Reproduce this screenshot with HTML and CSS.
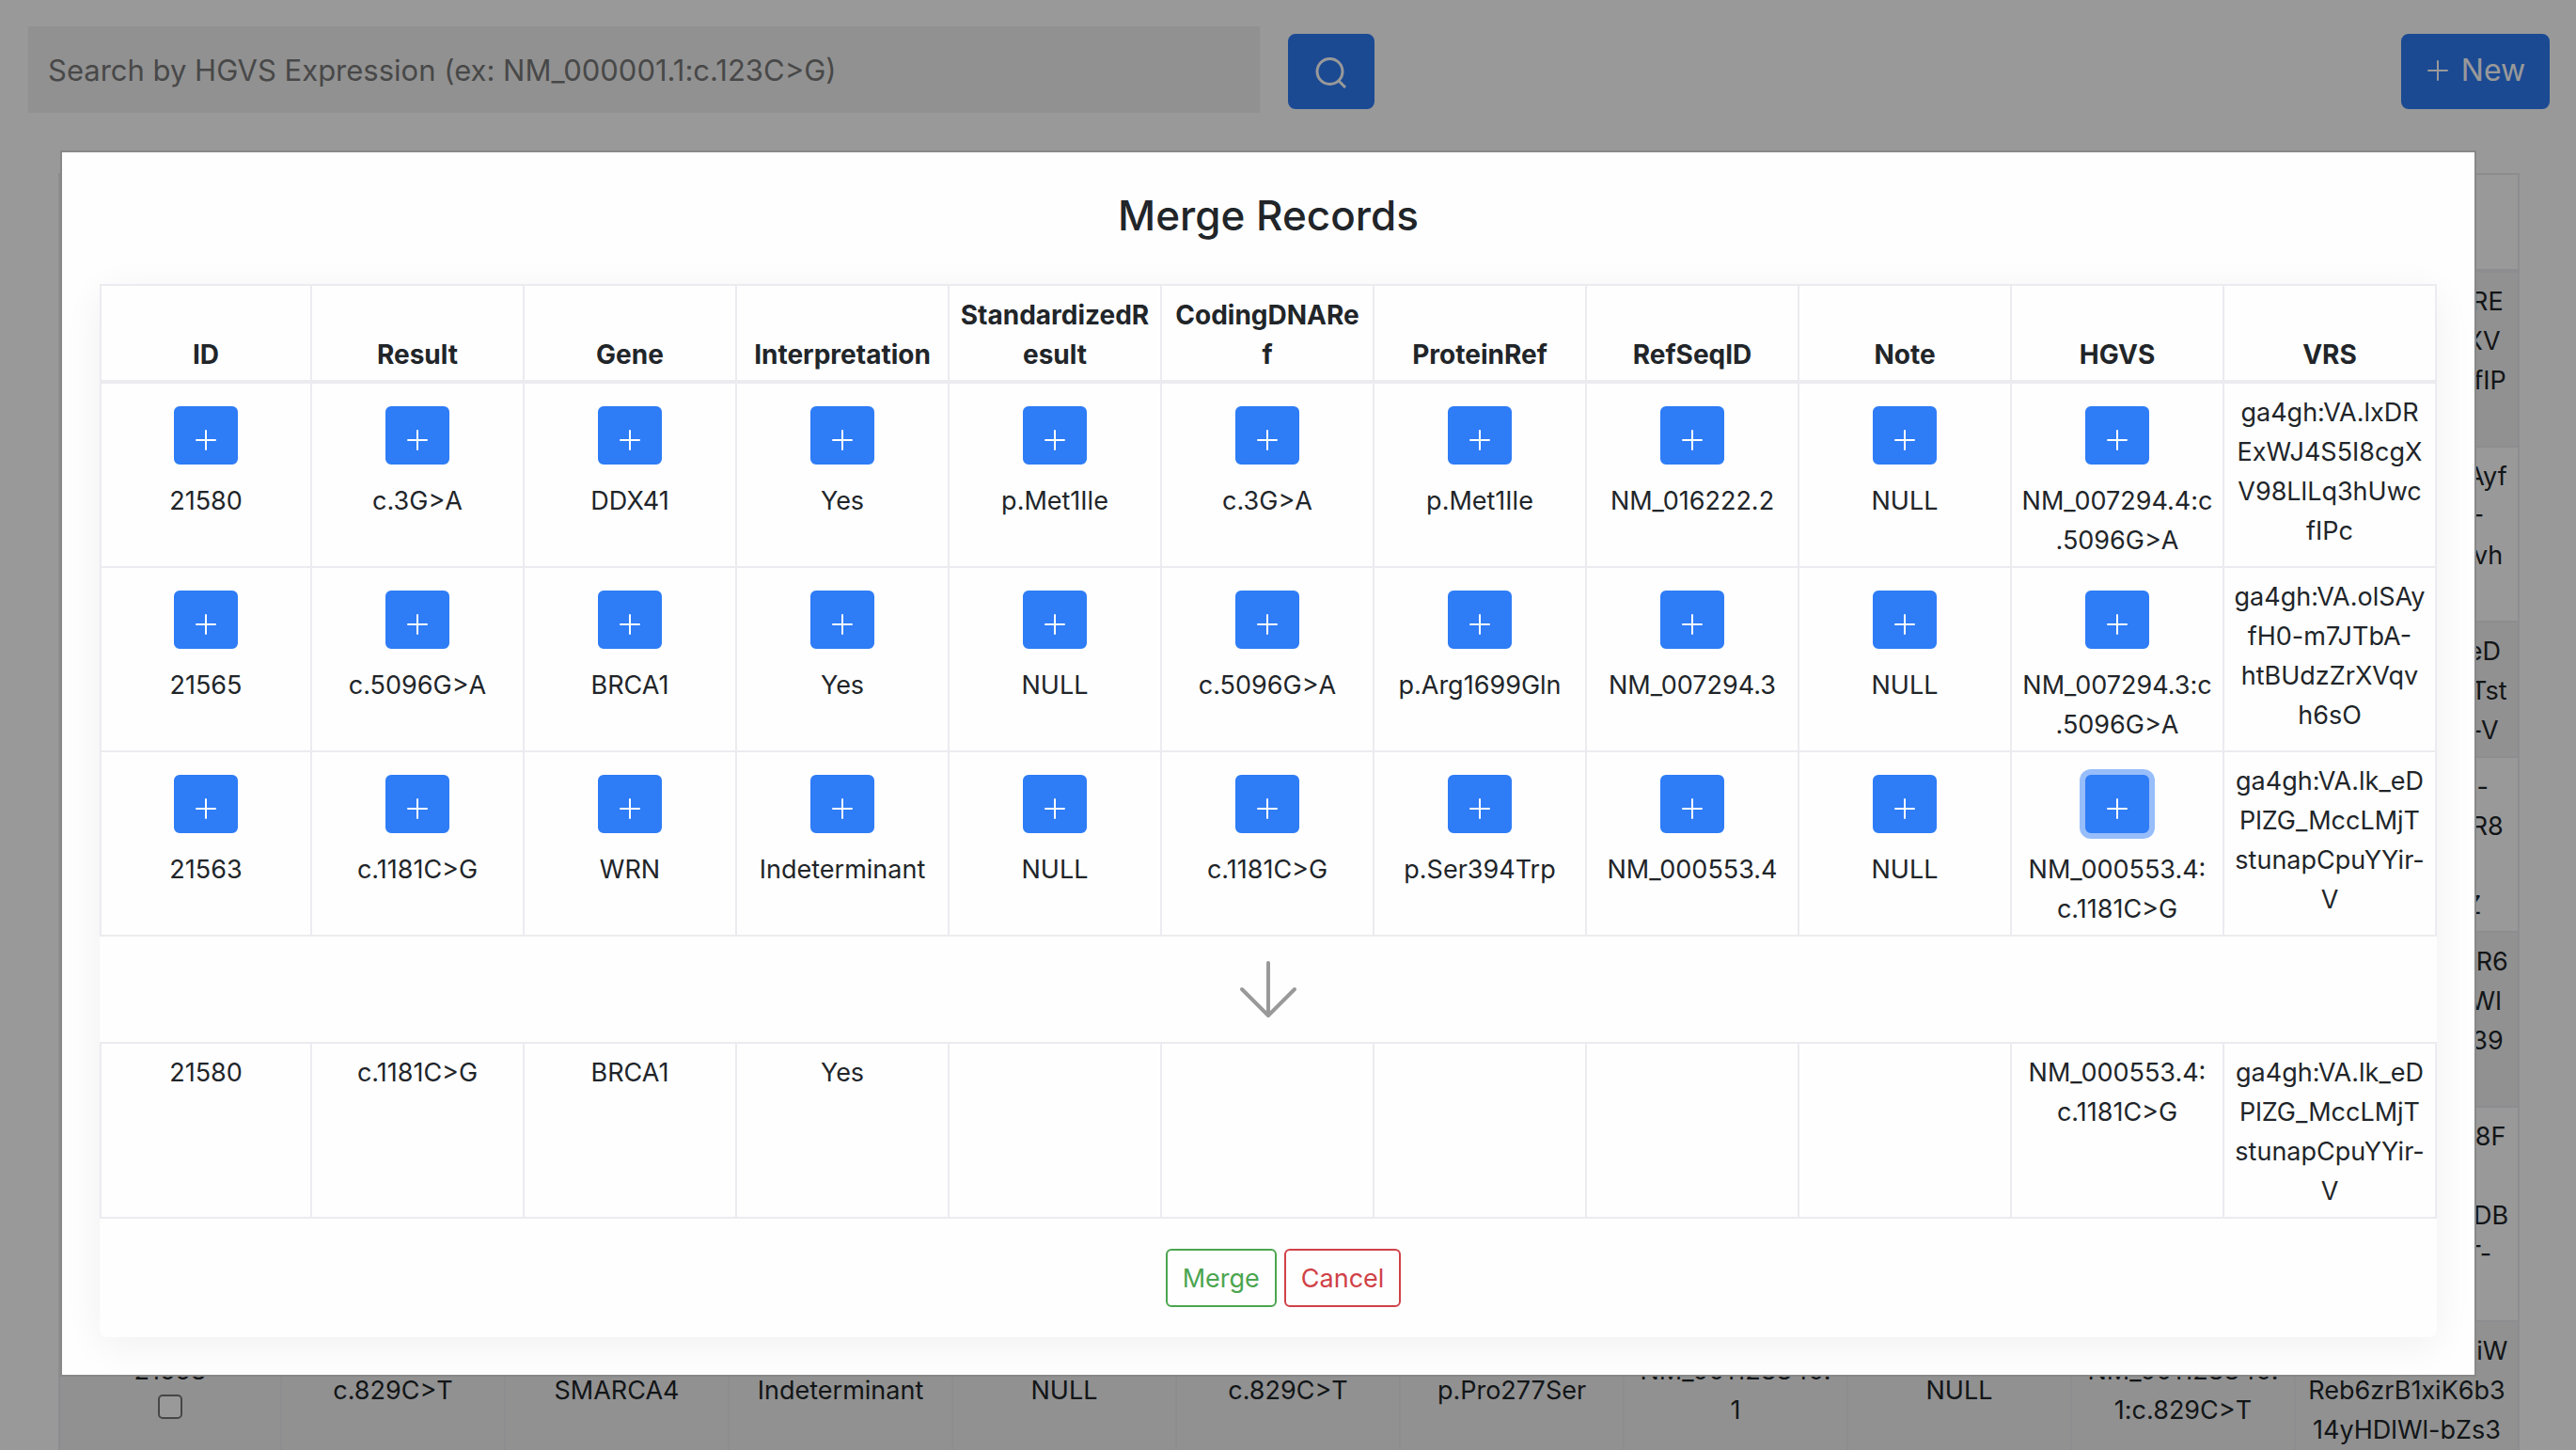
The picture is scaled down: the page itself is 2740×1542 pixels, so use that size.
FILE: index.html
```html
<!DOCTYPE html>
<html lang="en">
<head>
<meta charset="utf-8">
<title>Merge Records</title>
<link rel="stylesheet" href="styles.css">
</head>
<body>
<svg class="sprite" aria-hidden="true">
  <symbol id="plus" viewBox="0 0 22 22"><path d="M11 1v20M1 11h20" fill="none" stroke="currentColor" stroke-width="2" stroke-linecap="round"/></symbol>
</svg>

<main class="page">
  <header class="toolbar">
    <input class="search" type="text" aria-label="Search" placeholder="Search by HGVS Expression (ex: NM_000001.1:c.123C&gt;G)">
    <button class="btn btn-large btn-search" aria-label="Search">
      <svg width="36" height="36" viewBox="0 0 36 36"><circle cx="16.500" cy="18" r="13.500" fill="none" stroke="currentColor" stroke-width="3"/><path d="M26 28l7 7" fill="none" stroke="currentColor" stroke-width="3"/></svg>
    </button>
    <button class="btn btn-large btn-new"><svg class="plus"><use href="#plus"/></svg>New</button>
  </header>

  <div class="records">
  <table class="grid">
    <thead>
      <tr><th>ID</th><th>Result</th><th>Gene</th><th>Interpretation</th><th>StandardizedR<br>esult</th><th>CodingDNARef</th><th>ProteinRef</th><th>RefSeqID</th><th>Note</th><th>HGVS</th><th>VRS</th></tr>
    </thead>
    <tbody>
      <tr><td></td><td></td><td></td><td></td><td></td><td></td><td></td><td></td><td></td><td></td><td>ga4gh:VA.lxDRE<br>xWJ4S5I8cgXV<br>98LlLq3hUwcfIP<br>c</td></tr>
      <tr><td></td><td></td><td></td><td></td><td></td><td></td><td></td><td></td><td></td><td></td><td>ga4gh:VA.olSAyf<br>H0-m7JTbA-<br>htBUdzZrXVqvh<br>6sO</td></tr>
      <tr><td></td><td></td><td></td><td></td><td></td><td></td><td></td><td></td><td></td><td></td><td>ga4gh:VA.lk_eD<br>PlZG_MccLMjTst<br>unapCpuYYir-V</td></tr>
      <tr><td></td><td></td><td></td><td></td><td></td><td></td><td></td><td></td><td></td><td></td><td>ga4gh:VA.so-<br>kT5vWq2nNxR8<br>xJm4<br>bYc7dPsaXZ</td></tr>
      <tr><td></td><td></td><td></td><td></td><td></td><td></td><td></td><td></td><td></td><td></td><td>ga4gh:VA.dnKR6<br>tGm2vQpdHrWl<br>cYh5sZkTequ39<br>fD</td></tr>
      <tr><td></td><td></td><td></td><td></td><td></td><td></td><td></td><td></td><td></td><td></td><td>ga4gh:VA.ucn8F<br>pLk3<br>vNq7sHwYmcDB<br>x2JgRcGNdT-<br>hK</td></tr>
      <tr>
        <td><label>21558<input class="check" type="checkbox"></label></td>
        <td>c.829C&gt;T</td><td>SMARCA4</td><td>Indeterminant</td><td>NULL</td><td>c.829C&gt;T</td><td>p.Pro277Ser</td>
        <td>NM_001128849.<br>1</td><td>NULL</td><td>NM_001128849.<br>1:c.829C&gt;T</td><td>ga4gh:VA.mKtiW<br>Reb6zrB1xiK6b3<br>14yHDlWl-bZs3</td>
      </tr>
    </tbody>
  </table>
  </div>
</main>

<div class="overlay">
  <section class="dialog" role="dialog" aria-labelledby="dialog-title">
    <h1 class="title" id="dialog-title">Merge Records</h1>
    <div class="card">
      <table class="grid merge">
        <thead>
          <tr><th>ID</th><th>Result</th><th>Gene</th><th>Interpretation</th><th>StandardizedR<br>esult</th><th>CodingDNARe<br>f</th><th>ProteinRef</th><th>RefSeqID</th><th>Note</th><th>HGVS</th><th>VRS</th></tr>
        </thead>
        <tbody>
          <tr>
            <td><button class="btn pick" aria-label="Pick"><svg class="plus"><use href="#plus"/></svg></button>21580</td>
            <td><button class="btn pick" aria-label="Pick"><svg class="plus"><use href="#plus"/></svg></button>c.3G&gt;A</td>
            <td><button class="btn pick" aria-label="Pick"><svg class="plus"><use href="#plus"/></svg></button>DDX41</td>
            <td><button class="btn pick" aria-label="Pick"><svg class="plus"><use href="#plus"/></svg></button>Yes</td>
            <td><button class="btn pick" aria-label="Pick"><svg class="plus"><use href="#plus"/></svg></button>p.Met1Ile</td>
            <td><button class="btn pick" aria-label="Pick"><svg class="plus"><use href="#plus"/></svg></button>c.3G&gt;A</td>
            <td><button class="btn pick" aria-label="Pick"><svg class="plus"><use href="#plus"/></svg></button>p.Met1Ile</td>
            <td><button class="btn pick" aria-label="Pick"><svg class="plus"><use href="#plus"/></svg></button>NM_016222.2</td>
            <td><button class="btn pick" aria-label="Pick"><svg class="plus"><use href="#plus"/></svg></button>NULL</td>
            <td><button class="btn pick" aria-label="Pick"><svg class="plus"><use href="#plus"/></svg></button>NM_007294.4:c<br>.5096G&gt;A</td>
            <td>ga4gh:VA.lxDR<br>ExWJ4S5I8cgX<br>V98LlLq3hUwc<br>fIPc</td>
          </tr>
          <tr>
            <td><button class="btn pick" aria-label="Pick"><svg class="plus"><use href="#plus"/></svg></button>21565</td>
            <td><button class="btn pick" aria-label="Pick"><svg class="plus"><use href="#plus"/></svg></button>c.5096G&gt;A</td>
            <td><button class="btn pick" aria-label="Pick"><svg class="plus"><use href="#plus"/></svg></button>BRCA1</td>
            <td><button class="btn pick" aria-label="Pick"><svg class="plus"><use href="#plus"/></svg></button>Yes</td>
            <td><button class="btn pick" aria-label="Pick"><svg class="plus"><use href="#plus"/></svg></button>NULL</td>
            <td><button class="btn pick" aria-label="Pick"><svg class="plus"><use href="#plus"/></svg></button>c.5096G&gt;A</td>
            <td><button class="btn pick" aria-label="Pick"><svg class="plus"><use href="#plus"/></svg></button>p.Arg1699Gln</td>
            <td><button class="btn pick" aria-label="Pick"><svg class="plus"><use href="#plus"/></svg></button>NM_007294.3</td>
            <td><button class="btn pick" aria-label="Pick"><svg class="plus"><use href="#plus"/></svg></button>NULL</td>
            <td><button class="btn pick" aria-label="Pick"><svg class="plus"><use href="#plus"/></svg></button>NM_007294.3:c<br>.5096G&gt;A</td>
            <td>ga4gh:VA.olSAy<br>fH0-m7JTbA-<br>htBUdzZrXVqv<br>h6sO</td>
          </tr>
          <tr>
            <td><button class="btn pick" aria-label="Pick"><svg class="plus"><use href="#plus"/></svg></button>21563</td>
            <td><button class="btn pick" aria-label="Pick"><svg class="plus"><use href="#plus"/></svg></button>c.1181C&gt;G</td>
            <td><button class="btn pick" aria-label="Pick"><svg class="plus"><use href="#plus"/></svg></button>WRN</td>
            <td><button class="btn pick" aria-label="Pick"><svg class="plus"><use href="#plus"/></svg></button>Indeterminant</td>
            <td><button class="btn pick" aria-label="Pick"><svg class="plus"><use href="#plus"/></svg></button>NULL</td>
            <td><button class="btn pick" aria-label="Pick"><svg class="plus"><use href="#plus"/></svg></button>c.1181C&gt;G</td>
            <td><button class="btn pick" aria-label="Pick"><svg class="plus"><use href="#plus"/></svg></button>p.Ser394Trp</td>
            <td><button class="btn pick" aria-label="Pick"><svg class="plus"><use href="#plus"/></svg></button>NM_000553.4</td>
            <td><button class="btn pick" aria-label="Pick"><svg class="plus"><use href="#plus"/></svg></button>NULL</td>
            <td><button class="btn pick pick-active" aria-label="Pick"><svg class="plus"><use href="#plus"/></svg></button>NM_000553.4:<br>c.1181C&gt;G</td>
            <td>ga4gh:VA.lk_eD<br>PlZG_MccLMjT<br>stunapCpuYYir-<br>V</td>
          </tr>
        </tbody>
      </table>

      <div class="arrow">
        <svg width="64" height="64" viewBox="0 0 64 64"><path d="M32 4v56M4 32l28 28 28-28" fill="none" stroke="currentColor" stroke-width="4" stroke-linecap="round" stroke-linejoin="round"/></svg>
      </div>

      <table class="grid result">
        <tbody>
          <tr><td>21580</td><td>c.1181C&gt;G</td><td>BRCA1</td><td>Yes</td><td></td><td></td><td></td><td></td><td></td><td>NM_000553.4:<br>c.1181C&gt;G</td><td>ga4gh:VA.lk_eD<br>PlZG_MccLMjT<br>stunapCpuYYir-<br>V</td></tr>
        </tbody>
      </table>

      <div class="actions">
        <button class="btn btn-merge">Merge</button>
        <button class="btn btn-cancel">Cancel</button>
      </div>
    </div>
  </section>
</div>
</body>
</html>
```

FILE: styles.css
```css
* { box-sizing: border-box; }

body {
  margin: 0;
  height: 100vh;
  overflow: hidden;
  background: #fff;
  color: #212529;
  font: 27px/42px Inter, "Liberation Sans", sans-serif;
}

.sprite { display: none; }

.page { padding: 28px 28px 0 30px; }

.toolbar {
  display: flex;
  align-items: flex-end;
  margin-bottom: 64px;
}

.search {
  width: 1310px;
  height: 92px;
  margin-right: 30px;
  padding: 0 21px;
  border: 0;
  background: #f2f2f2;
  color: #212529;
  font: inherit;
  font-size: 31px;
}
.search::placeholder { color: #797979; opacity: 1; }

.btn {
  display: inline-flex;
  align-items: center;
  justify-content: center;
  height: 62px;
  padding: 0 16px;
  border: 2px solid #2e7cf6;
  border-radius: 6px;
  background: #2e7cf6;
  color: #fff;
  font: inherit;
}

.btn-large {
  height: 80px;
  margin-bottom: 4px;
  border-radius: 8px;
  font-size: 32px;
}
.btn-search { width: 92px; }
.btn-new { gap: 14px; width: 158px; margin-left: auto; padding: 0 0 3px 2px; }

.plus { width: 22px; height: 22px; }

.grid {
  width: 100%;
  border-spacing: 0;
  table-layout: fixed;
  text-align: center;
}
.grid th,
.grid td {
  padding: 10px 0 6px;
  border: solid #ebebf0;
  border-width: 0 2px 2px 0;
}
.grid th { font-size: 28px; font-weight: 700; vertical-align: bottom; }
.grid th:first-child,
.grid td:first-child { border-left-width: 2px; }
.grid thead th { border-top-width: 2px; border-bottom-width: 4px; }

.records { padding: 0 32px; }
.records tbody tr:nth-child(odd) { background: #f2f2f2; }
.records label {
  display: flex;
  flex-direction: column;
  align-items: center;
}

.check {
  width: 26px;
  height: 26px;
  margin: 4px 0 12px;
  border: 2px solid #767676;
  border-radius: 5px;
  background: #fff;
  appearance: none;
}

.overlay {
  position: fixed;
  inset: 0;
  padding: 160px 106px 0 64px;
  background: rgba(0, 0, 0, 0.4);
}

.dialog {
  padding: 38px 40px 40px;
  border: 2px solid #888;
  background: #fefefe;
}

.title {
  margin: 0 0 44px;
  font-size: 44px;
  font-weight: 500;
  line-height: 58px;
  text-align: center;
}

.card {
  border-radius: 8px;
  background: #fefefe;
  box-shadow: 0 8px 40px rgba(0, 0, 0, 0.06);
}

.merge td,
.result td { vertical-align: top; }
.result td { border-top-width: 2px; }

.pick {
  display: flex;
  width: 68px;
  margin: 14px auto 18px;
  padding: 10px 0 0;
}
.pick-active { box-shadow: 0 0 0 6px #97bdfa; }

.arrow {
  display: flex;
  justify-content: center;
  padding: 24px 0;
  color: #999;
}

.actions {
  display: flex;
  justify-content: center;
  gap: 8px;
  padding: 32px 0 32px 32px;
}
.btn-merge,
.btn-cancel { padding-top: 2px; background: transparent; }
.btn-merge { border-color: #4ba54f; color: #4ba54f; }
.btn-cancel { border-color: #d04147; color: #d04147; }
```
